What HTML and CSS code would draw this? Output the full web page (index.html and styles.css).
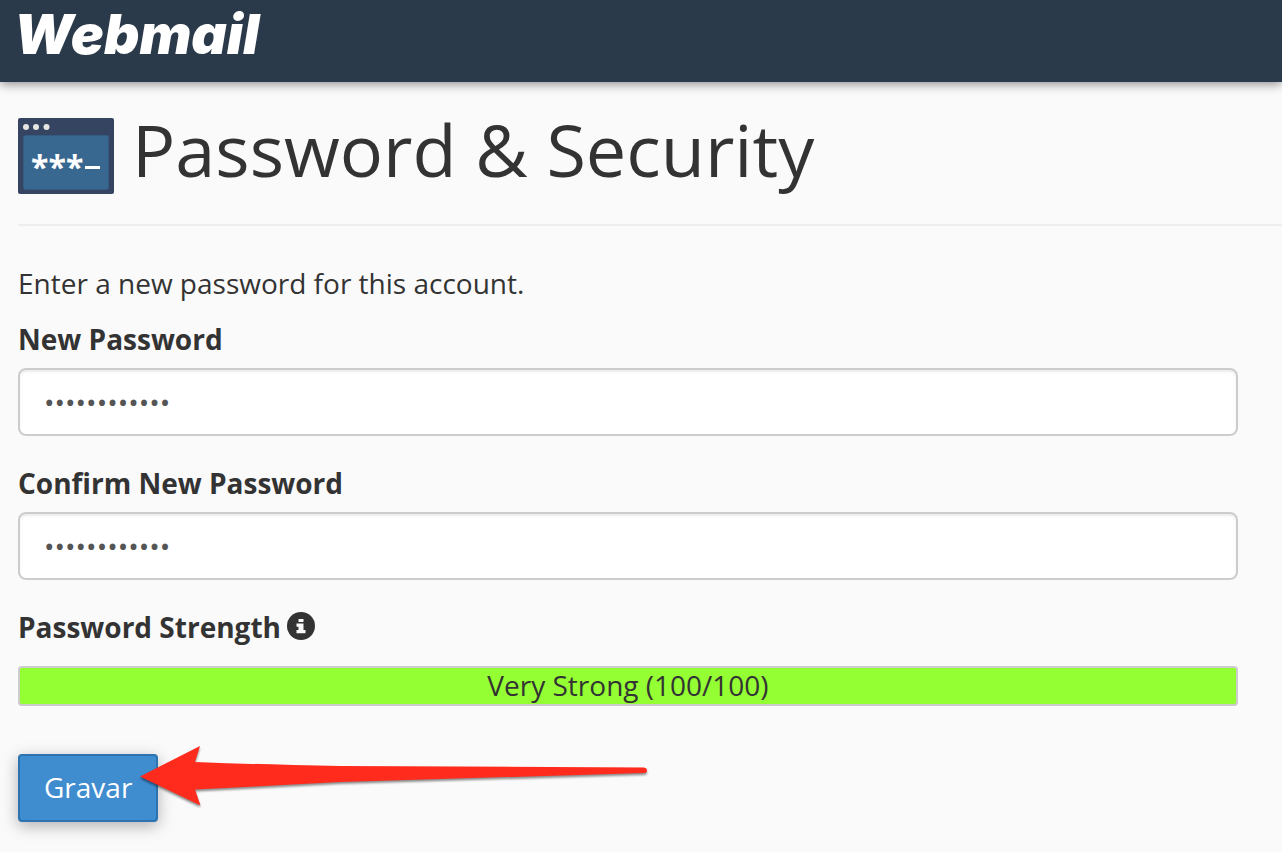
FILE: index.html
```html
<!DOCTYPE html>
<html lang="en">
<head>
<meta charset="utf-8">
<meta name="viewport" content="width=device-width, initial-scale=1">
<title>Webmail - Password &amp; Security</title>
<link rel="stylesheet" href="styles.css">
</head>
<body>
<header class="topbar">
  <a class="brand" href="#">Webmail</a>
</header>
<main class="content">
  <div class="page-header">
    <svg class="page-icon" viewBox="0 0 96 76" aria-hidden="true">
      <rect width="96" height="76" rx="2" fill="#354460"/>
      <rect x="5.500" y="17.500" width="85" height="54" rx="2" fill="#38688f" stroke="#345c82"/>
      <circle cx="8" cy="9" r="3" fill="#e6e6e2"/>
      <circle cx="18" cy="9" r="3" fill="#e6e6e2"/>
      <circle cx="28.500" cy="9" r="3" fill="#e6e6e2"/>
      <text class="page-icon-mask" x="13" y="61">***</text>
      <rect x="67" y="48" width="15" height="3" fill="#fff"/>
    </svg>
    <h1 class="page-title">Password &amp; Security</h1>
  </div>
  <form class="form">
    <p class="intro">Enter a new password for this account.</p>
    <div class="field">
      <label class="label" for="new-password">New Password</label>
      <input class="input" id="new-password" type="password" value="abcdefghijkl">
    </div>
    <div class="field">
      <label class="label" for="confirm-password">Confirm New Password</label>
      <input class="input" id="confirm-password" type="password" value="abcdefghijkl">
    </div>
    <div class="strength">
      <div class="strength-head">
        <span class="label" id="strength-label">Password Strength</span>
        <svg class="info" viewBox="0 0 28 28" aria-hidden="true">
          <circle cx="14" cy="14" r="14" fill="#333"/>
          <path d="M11.500 7h5v3h-5zM9.500 11.500h7v6.500h2v3.200h-9V18h2v-3.200h-2z" fill="#fafafa"/>
        </svg>
      </div>
      <div class="meter" role="meter" aria-labelledby="strength-label" aria-valuemin="0" aria-valuemax="100" aria-valuenow="100">Very Strong (100/100)</div>
    </div>
    <div class="actions">
      <button class="button" type="button">Gravar</button>
      <svg class="arrow" viewBox="0 0 510 70" aria-hidden="true">
        <path d="M0 24.500 60-6 55 10Q120 12.500 200 14L504 15.500Q507 16 507 18.500T504 21L200 30 55 37.500 60.500 53.500Z" fill="#ff2b1d"/>
      </svg>
    </div>
  </form>
</main>
</body>
</html>
```
FILE: styles.css
```css
* {
  box-sizing: border-box;
}

body {
  margin: 0;
  background: #fafafa;
  color: #333;
  font: 28px/40px "Open Sans", "Noto Sans", sans-serif;
}

.topbar {
  display: flex;
  padding: 6px 14px 20px;
  background: #2b3a4a;
  box-shadow: 0 2px 10px rgba(0, 0, 0, 0.45);
}

.brand {
  color: #fff;
  font: italic 900 55px/56px Inter, "Open Sans", sans-serif;
  text-decoration: none;
}

.content {
  padding: 26px 0 30px 18px;
}

.page-header {
  display: flex;
  align-items: flex-start;
  gap: 18px;
  padding-bottom: 30px;
  border-bottom: 2px solid #eee;
}

.page-icon {
  width: 96px;
  height: 76px;
  margin-top: 10px;
}

.page-icon-mask {
  fill: #fff;
  font: bold 32px "Open Sans", sans-serif;
}

.page-title {
  margin: 0;
  font-size: 72px;
  font-weight: 400;
  line-height: 82px;
}

.form {
  padding: 37px 44px 0 0;
}

.intro {
  margin: 0 0 16px;
}

.field {
  margin-bottom: 27px;
}

.label {
  display: block;
  font-weight: 700;
}

.input {
  display: block;
  width: 100%;
  height: 68px;
  margin-top: 9px;
  padding: 12px 24px;
  border: 2px solid #ccc;
  border-radius: 8px;
  background: #fff;
  box-shadow: inset 0 2px 2px rgba(0, 0, 0, 0.075);
  color: #555;
  font: inherit;
}

.strength-head {
  display: flex;
  align-items: center;
  gap: 6px;
  margin-bottom: 19px;
}

.info {
  width: 28px;
  height: 28px;
  margin-bottom: 2px;
}

.meter {
  padding-bottom: 2px;
  border: 2px solid #ccc;
  border-radius: 4px;
  background: #94ff32;
  line-height: 34px;
  text-align: center;
}

.actions {
  position: relative;
  margin-top: 48px;
}

.button {
  display: block;
  padding: 11px 24px 13px;
  border: 2px solid #2d73b0;
  border-radius: 4px;
  background: #3f8ccf;
  box-shadow: 0 4px 16px rgba(0, 0, 0, 0.3);
  color: #fff;
  font: inherit;
}

.arrow {
  position: absolute;
  top: -2px;
  left: 122px;
  width: 510px;
  height: 70px;
  overflow: visible;
  filter: drop-shadow(0 2px 1px rgba(0, 0, 0, 0.45));
  pointer-events: none;
}
```
